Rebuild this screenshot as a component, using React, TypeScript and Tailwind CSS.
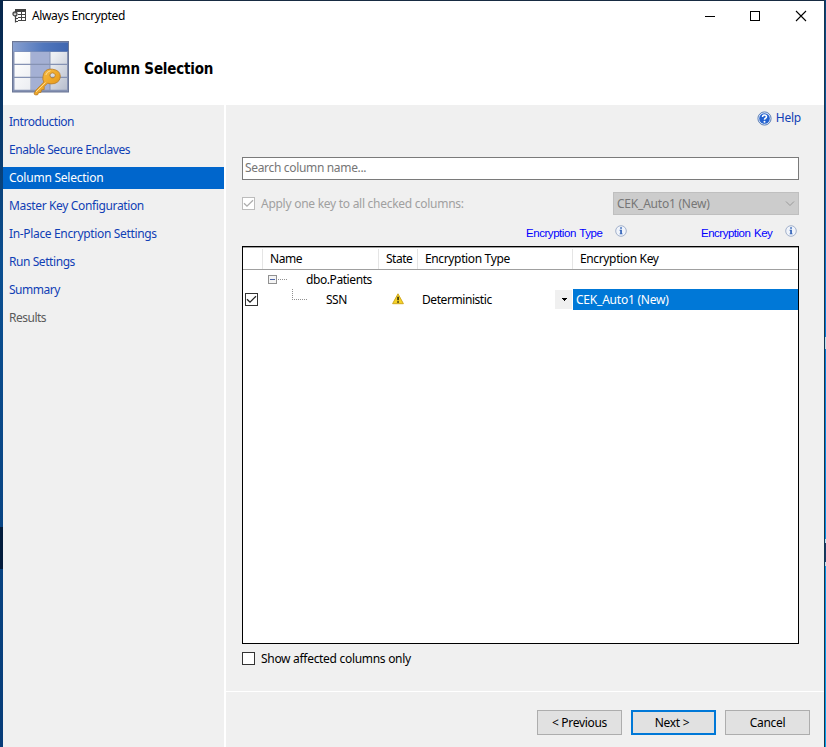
import type { ReactNode } from 'react';

const steps = [
    { label: 'Introduction', tracking: 'tracking-[-0.45px]' },
    { label: 'Enable Secure Enclaves', tracking: 'tracking-[-0.43px]' },
    { label: 'Column Selection', tracking: 'tracking-[-0.24px]', active: true },
    { label: 'Master Key Configuration', tracking: 'tracking-[-0.36px]' },
    { label: 'In-Place Encryption Settings', tracking: 'tracking-[-0.34px]' },
    { label: 'Run Settings', tracking: 'tracking-[-0.43px]' },
    { label: 'Summary', tracking: 'tracking-[-0.5px]' },
    { label: 'Results', tracking: 'tracking-[-0.5px]', disabled: true },
];

const AppIcon = () => (
    <svg width="15" height="14" viewBox="0 0 15 14" fill="none" stroke="#444">
        <path d="M3 1h11M13.500 0v12M9.500 2v10M6 5.500h8M6 8.500h8M6 11.500h8" shapeRendering="crispEdges" />
        <path d="M3 0h11v2.500H3z" fill="#444" stroke="none" shapeRendering="crispEdges" />
        <circle cx="3" cy="5" r="2" fill="#fff" strokeWidth="1.300" />
        <path d="M3 4v1.500" strokeWidth="0.800" />
        <path d="M3.500 7v6.500M4 9.500h2M4 12.500h2" strokeWidth="1.200" />
    </svg>
);

const TableKeyIcon = () => (
    <svg width="58" height="56" viewBox="0 0 58 56">
        <defs>
            <linearGradient id="bar" x1="0" x2="1">
                <stop offset="0" stopColor="#88a0d0" />
                <stop offset="0.550" stopColor="#5177bd" />
                <stop offset="1" stopColor="#3f66b0" />
            </linearGradient>
            <linearGradient id="cell" gradientUnits="userSpaceOnUse" x1="4" y1="12" x2="56" y2="50">
                <stop offset="0" stopColor="#ffffff" />
                <stop offset="0.500" stopColor="#eceef2" />
                <stop offset="1" stopColor="#b5bccb" />
            </linearGradient>
            <linearGradient id="gold" x1="0" x2="1" y1="0" y2="1">
                <stop offset="0" stopColor="#f9c552" />
                <stop offset="0.600" stopColor="#eda424" />
                <stop offset="1" stopColor="#c98215" />
            </linearGradient>
        </defs>
        <rect x="0.500" y="0.500" width="56" height="50.500" fill="#8592b3" stroke="#6b7796" />
        <rect x="1" y="1.500" width="55" height="9" fill="url(#bar)" />
        <path d="M2.500 11h16v11.800h-16zM2.500 24h16v11.800h-16zM2.500 37h16v11.800h-16z" fill="url(#cell)" />
        <path d="M19 11h18.500v11.800H19zM19 24h18.500v11.800H19zM19 37h18.500v11.800H19z" fill="#a4b0d4" />
        <path d="M38.500 11h16.500v11.800H38.500zM38.500 24h16.500v11.800H38.500zM38.500 37h16.500v11.800H38.500z" fill="url(#cell)" />
        <path
            fillRule="evenodd"
            d="M32.500 31q2.500-3.500 8-2.800q7.500 1 7.800 6.800q0 5.500-5.500 7.500q-4 1-7.300-.3l-3.300 3.300v3l-2.700.3l-.5 2.600l-2.500.3l-.8 2q-2 .8-3.700-.7l1.600-3.500l8.200-8.500q-1.500-2.500-.8-5.500q.3-2.500 1.500-4.500zM40.500 31.900a2.700 2.500 0 1 0 .1 0z"
            fill="url(#gold)"
            stroke="#b67a25"
            strokeWidth="0.800"
        />
        <path d="M33.500 41.500l-9.500 9.500M33.800 34q1-3.500 4.700-4.300" fill="none" stroke="#fde0a0" strokeWidth="0.900" />
    </svg>
);

const HelpIcon = () => (
    <svg width="15" height="15" viewBox="0 0 15 15">
        <circle cx="7.500" cy="7.500" r="6.600" fill="#dfe9f8" stroke="#5f82b8" strokeWidth="1" />
        <circle cx="7.500" cy="7.500" r="5.300" fill="#2462cf" />
        <path d="M5.500 6q0-2 2-2t2 1.800q0 1-1.100 1.500q-.9.500-.9 1.400" fill="none" stroke="#fff" strokeWidth="1.600" />
        <circle cx="7.500" cy="10.700" r="1" fill="#fff" />
    </svg>
);

const InfoIcon = () => (
    <svg width="12" height="12" viewBox="0 0 12 12" className="shrink-0">
        <circle cx="6" cy="6" r="5.300" fill="#f0f4fb" stroke="#9aa9c6" strokeWidth="0.900" />
        <path d="M5.200 2.200h1.700v1.600H5.200zM4.600 4.800h2.300v4h-1.700v-3h-.6zM4.600 8.500h3v.8h-3z" fill="#3564b8" />
    </svg>
);

const WarningIcon = () => (
    <svg width="12" height="12" viewBox="0 0 12 12">
        <path d="M6 .8L11.400 10.700H.6z" fill="#f5d327" stroke="#d0a81e" strokeWidth="1" strokeLinejoin="round" />
        <path d="M5.200 3.800h1.700v3.500H5.200zM5.200 8.200h1.700v1.500H5.200z" fill="#3a3310" />
    </svg>
);

const Check = ({ border, color }: { border: string; color?: string }) => (
    <span className={`flex h-[13px] w-[13px] shrink-0 border bg-white ${border}`}>
        {color && (
            <svg width="11" height="11" viewBox="0 0 11 11">
                <path d="M1 5.200l3 3l6-6" fill="none" stroke={color} strokeWidth="1.300" />
            </svg>
        )}
    </span>
);

const Button = ({ children, primary }: { children: ReactNode; primary?: boolean }) => (
    <button
        className={`h-[25px] w-[85px] bg-[#e1e1e1] text-center ${primary ? 'border-2 border-[#0078d7] pr-[3px]' : 'border border-[#adadad]'}`}
    >
        {children}
    </button>
);

const TitleBar = () => (
    <div className="flex h-[30px] items-center pl-[9px]">
        <AppIcon />
        <span className="ml-[5px] tracking-[-0.36px]">Always Encrypted</span>
        <svg className="-mt-px ml-auto mr-[16px]" width="103" height="12" viewBox="0 0 103 12" fill="none" stroke="#000">
            <path d="M0 6.500h10M45.500 1.500h9v9h-9z" shapeRendering="crispEdges" />
            <path d="M91 1l10 10M101 1l-10 10" strokeWidth="1.100" />
        </svg>
    </div>
);

const Sidebar = () => (
    <nav className="flex w-[223px] shrink-0 flex-col gap-[6px] border-r-2 border-white pt-[6px]">
        {steps.map((s) => (
            <div
                key={s.label}
                className={`flex h-[22px] items-center pl-[6px] ${s.tracking} ${
                    s.active ? 'bg-[#0066cc] text-white' : s.disabled ? 'text-[#5a5a5a]' : 'text-[#1040b5]'
                }`}
            >
                {s.label}
            </div>
        ))}
    </nav>
);

const ColumnGrid = () => (
    <div className="h-[398px] w-[557px] border border-black bg-white">
        <div className="flex h-[23px] items-stretch border-t border-b border-t-[#a0a0a0] border-b-[#a0a0a0] pt-px leading-[20px]">
            <div className="w-[20px] border-r border-[#e5e5e5]" />
            <div className="w-[116px] border-r border-[#e5e5e5] pl-[7px] tracking-[-0.4px]">Name</div>
            <div className="w-[39px] border-r border-[#e5e5e5] pl-[7px] tracking-[-0.5px]">State</div>
            <div className="w-[155px] border-r border-[#e5e5e5] pl-[7px] tracking-[-0.36px]">Encryption Type</div>
            <div className="pl-[7px] tracking-[-0.36px]">Encryption Key</div>
        </div>
        <div className="flex h-[19px] items-center pl-[25px]">
            <svg width="20" height="9" viewBox="0 0 20 9" shapeRendering="crispEdges">
                <rect x="0.500" y="0.500" width="8" height="8" fill="#f4f4f4" stroke="#919191" />
                <path d="M2 4.500h5" stroke="#4b63a7" />
                <path d="M10 4.500h10" stroke="#909090" strokeDasharray="1 1" />
            </svg>
            <span className="ml-[18px] tracking-[-0.42px]">dbo.Patients</span>
        </div>
        <div className="flex h-[21px] items-center pl-[2px]">
            <Check border="border-[#333]" color="#222" />
            <svg className="-mt-[10px] ml-[34px]" width="16" height="11" viewBox="0 0 16 11" shapeRendering="crispEdges">
                <path d="M0.500 0v11M2 10.500h14" stroke="#909090" strokeDasharray="1 1" />
            </svg>
            <span className="ml-[18px] w-[66px] tracking-[-0.5px]">SSN</span>
            <span className="-mt-[2px]">
                <WarningIcon />
            </span>
            <span className="ml-[18px] w-[133px] tracking-[-0.43px]">Deterministic</span>
            <span className="flex h-[19px] w-[17px] items-center justify-center bg-[#f0f0f0] pl-px">
                <svg width="5" height="3" viewBox="0 0 5 3" shapeRendering="crispEdges">
                    <path d="M0 0h5v1H0zM1 1h3v1H1zM2 2h1v1H2z" />
                </svg>
            </span>
            <span className="ml-px flex h-[21px] flex-1 items-center bg-[#0078d7] pl-[3px] tracking-[-0.22px] text-white">
                CEK_Auto1 (New)
            </span>
        </div>
    </div>
);

export default function App() {
    return (
        <div className="flex h-[747px] w-[826px] overflow-hidden bg-[#0c3765] font-['Noto_Sans',sans-serif] text-[12px] leading-[16px] tracking-[-0.3px] text-black">
            <div className="w-[3px] shrink-0 bg-linear-to-b from-[#06254a] via-[#0b4f91] via-35% to-[#073c78] pt-[527px]">
                <div className="h-[42px] bg-[#031c3c]" />
            </div>
            <div className="flex w-[821px] shrink-0 flex-col border-t border-[#172b42] bg-[#f0f0f0]">
                <header className="h-[104px] shrink-0 bg-white">
                    <TitleBar />
                    <div className="flex pl-[9px] pt-[10px]">
                        <TableKeyIcon />
                        <h1 className="ml-[14px] mt-[18px] font-['DejaVu_Sans_Condensed','DejaVu_Sans',sans-serif] text-[15px] font-bold leading-[20px] tracking-[-0.2px]">
                            Column Selection
                        </h1>
                    </div>
                </header>
                <div className="flex flex-1">
                    <Sidebar />
                    <div className="flex flex-1 flex-col">
                        <main className="h-[586px] pl-[16px] pt-[5px]">
                            <div className="flex h-[16px] w-[559px] items-center justify-end gap-[4px] text-[#1040b5]">
                                <HelpIcon />
                                <span className="tracking-[-0.25px]">Help</span>
                            </div>
                            <div className="mt-[31px] flex h-[23px] w-[557px] items-center border border-[#7a7a7a] bg-white pb-px pl-[2px] tracking-[-0.33px] text-[#767676]">
                                Search column name...
                            </div>
                            <div className="mt-[12px] flex h-[23px] w-[557px] items-center text-[#a0a0a0]">
                                <Check border="border-[#bcbcbc]" color="#adadad" />
                                <span className="ml-[6px] tracking-[-0.27px]">Apply one key to all checked columns:</span>
                                <div className="ml-auto flex h-[23px] w-[186px] items-center border border-[#bfbfbf] bg-[#cccccc] pl-[3px] pr-[3px] tracking-[-0.22px] text-[#777]">
                                    CEK_Auto1 (New)
                                    <svg className="ml-auto" width="10" height="6" viewBox="0 0 10 6" fill="none" stroke="#999">
                                        <path d="M1 0.500l4 4l4-4" />
                                    </svg>
                                </div>
                            </div>
                            <div className="flex h-[31px] w-[557px] items-start pt-[10px] font-['Liberation_Sans',sans-serif] text-[11.5px] tracking-[-0.45px] text-[#0000ff] [word-spacing:1px]">
                                <span className="ml-[284px] w-[89px]">Encryption Type</span>
                                <InfoIcon />
                                <span className="ml-[74px] w-[84px] tracking-[-0.5px]">Encryption Key</span>
                                <InfoIcon />
                            </div>
                            <ColumnGrid />
                            <div className="mt-[7px] flex items-start">
                                <span className="mt-px">
                                    <Check border="border-[#333]" />
                                </span>
                                <span className="ml-[6px]">Show affected columns only</span>
                            </div>
                        </main>
                        <footer className="flex flex-1 gap-[9px] border-t border-white pl-[311px] pt-[18px]">
                            <Button>&lt; Previous</Button>
                            <Button primary>Next &gt;</Button>
                            <Button>Cancel</Button>
                        </footer>
                    </div>
                </div>
            </div>
            <div className="flex w-[2px] shrink-0 flex-col border-l border-[#18344f] bg-linear-to-b from-[#074379] via-[#0078d7] via-40% to-[#00a2ed]">
                <div className="mt-[337px] h-[12px] bg-[#b3e2f4]" />
                <div className="mt-[190px] h-[27px] border-y-4 border-[#b3e2f4] bg-[#133c6b]" />
            </div>
        </div>
    );
}
